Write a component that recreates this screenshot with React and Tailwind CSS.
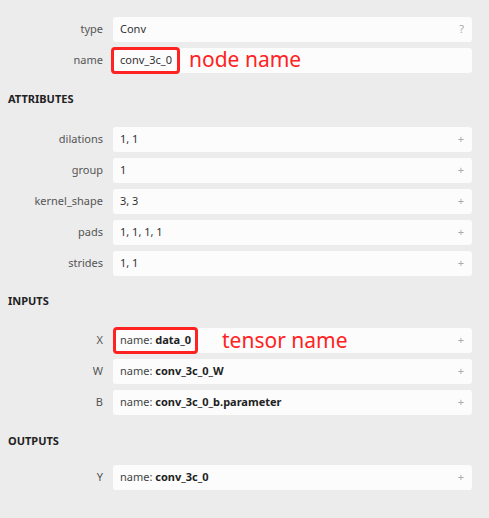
import React from 'react'

const font = { fontFamily: '"Noto Sans", "Open Sans", sans-serif' }

function Row({ label, children, icon = '+', annotation }) {
  return (
    <div className="flex items-center h-[25px] mb-[6px]">
      <div className="w-[103px] text-right text-[11px] text-[#555]">{label}</div>
      <div className="relative ml-[10px] w-[359px] h-[25px] bg-[#fcfcfc] rounded-[3px] flex items-center justify-between pl-[7px] pr-[8px] text-[11px] text-[#333]">
        <span>{children}</span>
        <span className="text-[#aaa] text-[11px]">{icon}</span>
        {annotation}
      </div>
    </div>
  )
}

function Header({ children, className }) {
  return (
    <div className={'pl-[8px] text-[11px] font-bold text-[#222] ' + className}>{children}</div>
  )
}

function Name({ value }) {
  return (
    <>
      <span className="text-[#444]">name: </span>
      <span className="font-bold text-[#222]">{value}</span>
    </>
  )
}

export default function App() {
  return (
    <div className="w-[489px] h-[518px] bg-[#ececec] pt-[17px] overflow-hidden" style={font}>
      <Row label="type" icon="?">Conv</Row>
      <Row
        label="name"
        icon=""
        annotation={
          <>
            <div className="absolute left-[-2px] top-[-1px] w-[69px] h-[27px] border-[3px] border-[#f22] rounded-[4px]" />
            <div className="absolute left-[76px] top-[-4px] text-[21px] leading-[30px] text-[#f22]">node name</div>
          </>
        }
      >
        conv_3c_0
      </Row>

      <Header className="mt-[18px] mb-[19px]">ATTRIBUTES</Header>
      <Row label="dilations">1, 1</Row>
      <Row label="group">1</Row>
      <Row label="kernel_shape">3, 3</Row>
      <Row label="pads">1, 1, 1, 1</Row>
      <Row label="strides">1, 1</Row>

      <Header className="mt-[17px] mb-[19px]">INPUTS</Header>
      <Row
        label="X"
        annotation={
          <>
            <div className="absolute left-0 top-[-1px] w-[85px] h-[27px] border-[3px] border-[#f22] rounded-[4px]" />
            <div className="absolute left-[109px] top-[-3px] text-[21px] leading-[30px] text-[#f22]">tensor name</div>
          </>
        }
      >
        <Name value="data_0" />
      </Row>
      <Row label="W"><Name value="conv_3c_0_W" /></Row>
      <Row label="B"><Name value="conv_3c_0_b.parameter" /></Row>

      <Header className="mt-[18px] mb-[15px]">OUTPUTS</Header>
      <Row label="Y"><Name value="conv_3c_0" /></Row>
    </div>
  )
}
